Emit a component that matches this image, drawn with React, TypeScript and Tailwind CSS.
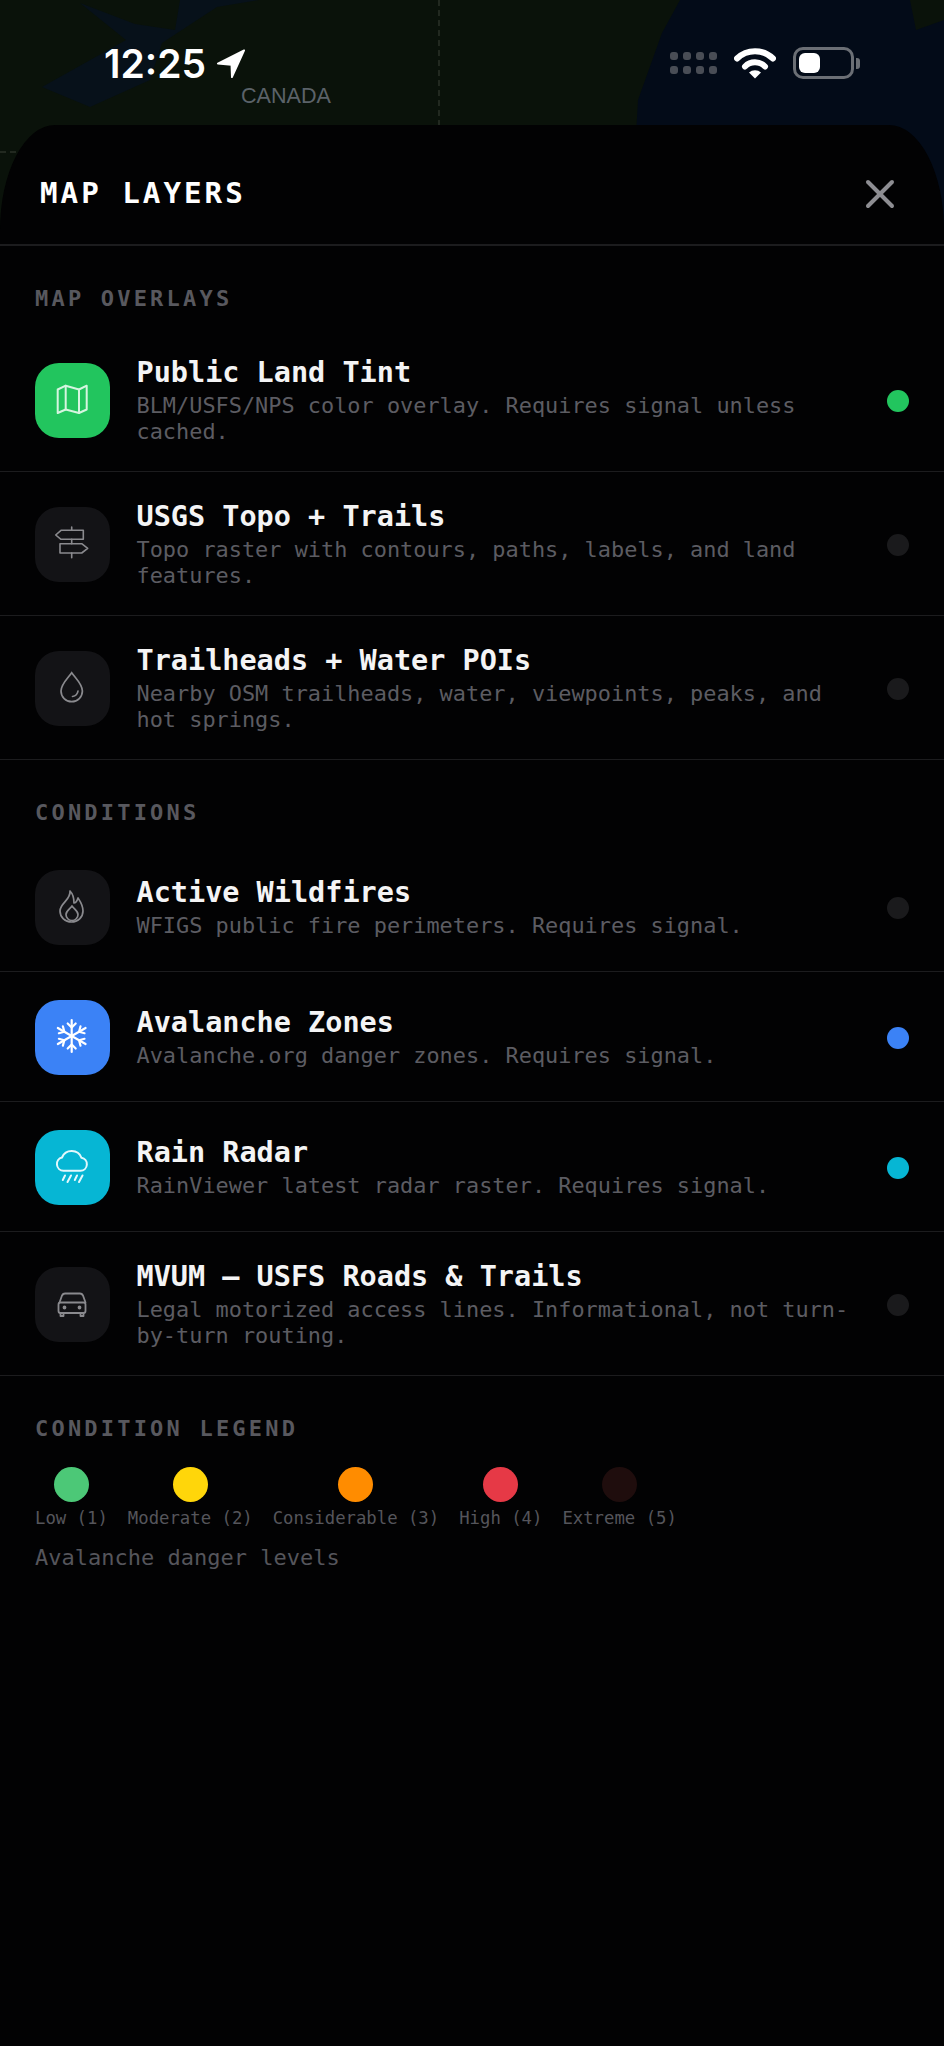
import React from 'react';
import { X } from 'lucide-react';

const MapIcon = () => (
  <svg viewBox="0 0 75 75" className="w-full h-full" fill="none" stroke="#d6f5e0" strokeWidth="2" strokeLinejoin="round" strokeLinecap="round">
    <path d="M22.7 26.5 30.7 22.7 44 26.5 51.7 22.7V46.5L44 50 30.7 46.5 22.7 50Z" />
    <path d="M30.7 22.7V46.5M44 26.5V50" />
  </svg>
);

const SignIcon = () => (
  <svg viewBox="0 0 75 75" className="w-full h-full" fill="none" stroke="#8a8a8e" strokeWidth="1.6" strokeLinejoin="round" strokeLinecap="round">
    <path d="M20.7 28 26 23.3H48.3V32.3H26Z" />
    <path d="M25 36.7H46.7L52.7 41.3 46.7 46H25Z" />
    <path d="M36.7 20V23.3M36.7 32.3V36.7M36.7 46V50.7" />
  </svg>
);

const DropIcon = () => (
  <svg viewBox="0 0 75 75" className="w-full h-full" fill="none" stroke="#8a8a8e" strokeWidth="1.7" strokeLinecap="round">
    <path d="M36.7 21.7C33 27 26 33 26 40A10.7 10.7 0 0 0 47.4 40C47.4 33 40.4 27 36.7 21.7Z" />
    <path d="M43 40A6.5 6.5 0 0 1 37.5 45.5" />
  </svg>
);

const FlameIcon = () => (
  <svg viewBox="0 0 75 75" className="w-full h-full" fill="none" stroke="#8a8a8e" strokeWidth="1.7" strokeLinejoin="round">
    <path d="M35 21C36 30 25 33 25 41A11.5 11 0 0 0 48 41C48 35 45 31 43 28 42 31 41 33 39 33 39 29 38 24 35 21Z" />
    <path d="M37 36C35 39 31 41 31 44.5A6 6 0 0 0 43 44.5C43 41 39 39 37 36Z" />
  </svg>
);

const RainIcon = () => (
  <svg viewBox="0 0 75 75" className="w-full h-full" fill="none" stroke="#e3f8fc" strokeWidth="2" strokeLinecap="round" strokeLinejoin="round">
    <path d="M28.5 40.7H45.5A6.5 6.5 0 0 0 46.5 27.8 10.5 10.5 0 0 0 27 27.5 6.7 6.7 0 0 0 28.5 40.7Z" />
    <path d="M30 45.5 27.8 50M36 45.5 32.5 52M42 45.5 39.8 50M47.5 45.5 44 52" />
  </svg>
);

const CarIcon = () => (
  <svg viewBox="0 0 75 75" className="w-full h-full" fill="none" stroke="#8a8a8e" strokeWidth="1.8" strokeLinecap="round" strokeLinejoin="round">
    <path d="M24.5 35.5 27 28.5Q28 26.5 30 26.5H45Q47 26.5 48 28.5L50.5 35.5" />
    <rect x="23.5" y="35.5" width="27" height="10.5" rx="2" />
    <path d="M25.5 46V49H28.5V46M45.5 46V49H48.5V46" />
    <circle cx="29.5" cy="40.5" r="1" fill="#8a8a8e" />
    <circle cx="44.5" cy="40.5" r="1" fill="#8a8a8e" />
  </svg>
);

const SnowIcon = () => (
  <svg viewBox="0 0 75 75" className="w-full h-full" fill="none" stroke="#fff" strokeWidth="2.2" strokeLinecap="round" strokeLinejoin="round">
    {[0, 60, 120].map((deg) => (
      <g key={deg} transform={`rotate(${deg} 36.7 36)`}>
        <path d="M36.7 20V52" />
        <path d="M32.7 23.5 36.7 27.5 40.7 23.5M32.7 48.5 36.7 44.5 40.7 48.5" />
      </g>
    ))}
  </svg>
);

const overlays = [
  {
    title: 'Public Land Tint',
    desc: 'BLM/USFS/NPS color overlay. Requires signal unless cached.',
    icon: <MapIcon />,
    box: 'bg-[#22c55e]',
    dot: 'bg-[#22c55e]',
  },
  {
    title: 'USGS Topo + Trails',
    desc: 'Topo raster with contours, paths, labels, and land features.',
    icon: <SignIcon />,
    box: 'bg-[#131316]',
    dot: 'bg-[#1a1a1c]',
  },
  {
    title: 'Trailheads + Water POIs',
    desc: 'Nearby OSM trailheads, water, viewpoints, peaks, and hot springs.',
    icon: <DropIcon />,
    box: 'bg-[#131316]',
    dot: 'bg-[#1a1a1c]',
  },
];

const conditions = [
  {
    title: 'Active Wildfires',
    desc: 'WFIGS public fire perimeters. Requires signal.',
    icon: <FlameIcon />,
    box: 'bg-[#131316]',
    dot: 'bg-[#1a1a1c]',
  },
  {
    title: 'Avalanche Zones',
    desc: 'Avalanche.org danger zones. Requires signal.',
    icon: <SnowIcon />,
    box: 'bg-[#3b82f6]',
    dot: 'bg-[#3b82f6]',
  },
  {
    title: 'Rain Radar',
    desc: 'RainViewer latest radar raster. Requires signal.',
    icon: <RainIcon />,
    box: 'bg-[#06b6d4]',
    dot: 'bg-[#06b6d4]',
  },
  {
    title: 'MVUM — USFS Roads & Trails',
    desc: 'Legal motorized access lines. Informational, not turn-by-turn routing.',
    icon: <CarIcon />,
    box: 'bg-[#131316]',
    dot: 'bg-[#1a1a1c]',
  },
];

const legend = [
  { name: 'Low (1)', color: 'bg-[#4cc877]' },
  { name: 'Moderate (2)', color: 'bg-[#ffd60a]' },
  { name: 'Considerable (3)', color: 'bg-[#ff8c00]' },
  { name: 'High (4)', color: 'bg-[#e63946]' },
  { name: 'Extreme (5)', color: 'bg-[#1f0d0d]' },
];

type RowProps = { title: string; desc: string; icon: React.ReactNode; box: string; dot: string };

const Row: React.FC<RowProps> = ({ title, desc, icon, box, dot }) => (
  <div className="flex items-center pl-[35px] pr-[35px] pt-[28px] pb-[26px] border-b border-[#1c1c1e]">
    <div className={`w-[75px] h-[75px] rounded-[24px] shrink-0 ${box}`}>{icon}</div>
    <div className="w-[723px] ml-[26.5px] shrink-0">
      <div className="text-[28.5px] leading-[34px] mb-[3px] font-bold text-[#f4f4f5]">{title}</div>
      <div className="text-[21.9px] leading-[26px] text-[#5c5c62]">{desc}</div>
    </div>
    <div className={`w-[22px] h-[22px] rounded-full ml-auto shrink-0 ${dot}`} />
  </div>
);

const SectionLabel: React.FC<{ text: string }> = ({ text }) => (
  <div className="px-[35px] pt-[40px] pb-[16px] text-[22px] leading-[26px] font-bold tracking-[3.2px] text-[#58585e]">
    {text}
  </div>
);

const App: React.FC = () => {
  return (
    <div className="relative w-[944px] h-[2046px] overflow-hidden bg-[#0a120a] flex flex-col font-['DejaVu_Sans_Mono',monospace]">
      {/* map behind the sheet */}
      <svg className="absolute top-0 left-0" width="944" height="240" viewBox="0 0 944 240">
        <rect width="944" height="240" fill="#0a120a" />
        <path d="M80 3 126 40 42 87 90 107 150 80 162 43 217 7 259 0 180 0 175 30 135 24Z" fill="#07111a" />
        <path d="M680 0 662 33 638 100 630 240H944V20L916 30 910 0Z" fill="#030b18" />
        <path d="M439 0V125" stroke="#3a4036" strokeWidth="1" strokeDasharray="6 4" />
        <path d="M0 152H20" stroke="#3a4036" strokeWidth="1" strokeDasharray="6 4" />
      </svg>

      {/* status bar */}
      <div className="relative h-[125px] shrink-0">
        <div className="absolute left-[104px] top-[41px] flex items-center font-['Inter',sans-serif] text-[39px] leading-[46px] font-semibold text-white">
          12:25
          <svg width="30" height="30" viewBox="0 0 32 32" className="ml-[10px]">
            <path d="M30 1.5 2 15.5 16.5 17 17 30Z" fill="#fff" stroke="#fff" strokeWidth="2" strokeLinejoin="round" />
          </svg>
        </div>
        <div className="absolute left-[241px] top-[85px] font-['Liberation_Sans',sans-serif] text-[21.6px] leading-[22px] text-[#5b6269]">
          CANADA
        </div>
        <div className="absolute left-[670px] top-[47px] flex items-center">
          <div className="grid grid-cols-4 gap-x-[5px] gap-y-[6px]">
            {Array.from({ length: 8 }).map((_, i) => (
              <div key={i} className="w-[8px] h-[8px] rounded-[3px] bg-[#494d55]" />
            ))}
          </div>
          <svg width="42" height="32" viewBox="0 0 42 32" className="ml-[17px]" fill="none">
            <path d="M3 11.5A26 26 0 0 1 39 11.5" stroke="#fff" strokeWidth="6" strokeLinecap="round" />
            <path d="M11 19.5A14 14 0 0 1 31 19.5" stroke="#fff" strokeWidth="6" strokeLinecap="round" />
            <path d="M21 31.5 15 25.5A9 9 0 0 1 27 25.5Z" fill="#fff" />
          </svg>
          <div className="ml-[17px] w-[61px] h-[32px] rounded-[10px] border-[3px] border-[#6b6f75] p-[3px]">
            <div className="w-[21px] h-full rounded-[6px] bg-white" />
          </div>
          <div className="ml-[2px] w-[4px] h-[11px] rounded-r-[3px] bg-[#6b6f75]" />
        </div>
      </div>

      {/* sheet */}
      <div className="relative flex-1 bg-[#020203] [border-top-left-radius:55px_105px] [border-top-right-radius:55px_105px]">
        <div className="h-[121px] flex items-center justify-between pt-[18px] pl-[40px] pr-[40px] border-b-2 border-[#1c1c1e]">
          <div className="text-[29.2px] font-bold tracking-[3px] text-white">MAP LAYERS</div>
          <X size={48} strokeWidth={2} className="text-[#8e8e93]" />
        </div>

        <SectionLabel text="MAP OVERLAYS" />
        {overlays.map((item) => (
          <Row key={item.title} {...item} />
        ))}

        <SectionLabel text="CONDITIONS" />
        {conditions.map((item) => (
          <Row key={item.title} {...item} />
        ))}

        <SectionLabel text="CONDITION LEGEND" />
        <div className="px-[35px] pt-[9px]">
          <div className="flex gap-[20px]">
            {legend.map((l) => (
              <div key={l.name} className="flex flex-col items-center gap-[5px]">
                <div className={`w-[35px] h-[35px] rounded-full ${l.color}`} />
                <div className="text-[17.3px] leading-[22px] text-[#55555b]">{l.name}</div>
              </div>
            ))}
          </div>
          <div className="mt-[16px] text-[22px] leading-[26px] text-[#55555b]">Avalanche danger levels</div>
        </div>
      </div>
    </div>
  );
};

export default App;
